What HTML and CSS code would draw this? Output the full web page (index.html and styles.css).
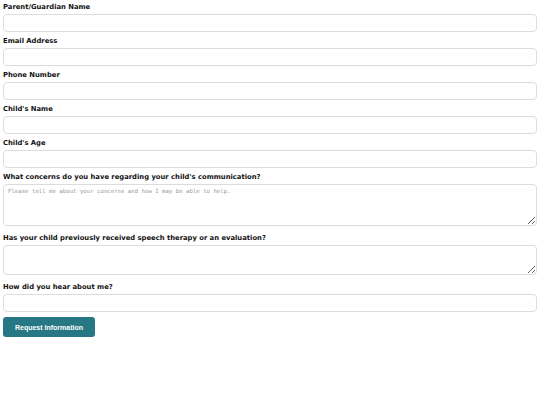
FILE: index.html
```html
<!DOCTYPE html>
<html lang="en">
<head>
    <meta charset="utf-8">
    <title>Request Information</title>
    <link rel="stylesheet" href="styles.css">
</head>
<body>
<form id="contact" class="contact-form">
    <div class="field">
        <label for="parent_name">Parent/Guardian Name</label>
        <input type="text" id="parent_name" name="parent_name">
    </div>
    <div class="field">
        <label for="email">Email Address</label>
        <input type="email" id="email" name="email">
    </div>
    <div class="field">
        <label for="phone">Phone Number</label>
        <input type="tel" id="phone" name="phone">
    </div>
    <div class="field">
        <label for="child_name">Child's Name</label>
        <input type="text" id="child_name" name="child_name">
    </div>
    <div class="field">
        <label for="child_age">Child's Age</label>
        <input type="text" id="child_age" name="child_age">
    </div>
    <div class="field multi">
        <label for="concerns">What concerns do you have regarding your child's communication?</label>
        <textarea id="concerns" name="concerns" class="tall" placeholder="Please tell me about your concerns and how I may be able to help."></textarea>
    </div>
    <div class="field multi">
        <label for="previous">Has your child previously received speech therapy or an evaluation?</label>
        <textarea id="previous" name="previous" class="short"></textarea>
    </div>
    <div class="field">
        <label for="referral">How did you hear about me?</label>
        <input type="text" id="referral" name="referral">
    </div>
    <button type="submit" class="btn-submit">Request Information</button>
</form>
</body>
</html>
```

FILE: styles.css
```css
body {
    margin: 0;
    background: #fff;
    font-family: "DejaVu Sans", Verdana, sans-serif;
    color: #111;
}

.contact-form {
    padding: 3px 3px 0 3px;
}

.field {
    margin-bottom: 5px;
}

.field.multi {
    margin-bottom: 8px;
}

.field label {
    display: block;
    font-size: 6.8px;
    font-weight: bold;
    line-height: 9px;
    margin-bottom: 2px;
    padding-top: 1px;
    margin-top: -1px;
}

.field input,
.field textarea {
    display: block;
    box-sizing: border-box;
    width: 100%;
    height: 18px;
    margin: 0;
    padding: 3px 4px;
    border: 1px solid #dcdcdc;
    border-radius: 4px;
    background: #fff;
    font-family: "DejaVu Sans Mono", monospace;
    font-size: 5.7px;
}

.field textarea {
    resize: vertical;
}

.field textarea.tall {
    height: 42px;
}

.field textarea.short {
    height: 30px;
}

.field textarea::placeholder {
    color: #999;
}

.btn-submit {
    display: block;
    width: 92px;
    height: 20px;
    margin-top: 2px;
    padding: 0;
    border: none;
    border-radius: 3px;
    background: #277884;
    color: #fff;
    font-family: "Liberation Sans", Arial, sans-serif;
    font-size: 7px;
    font-weight: bold;
    cursor: pointer;
}
```
